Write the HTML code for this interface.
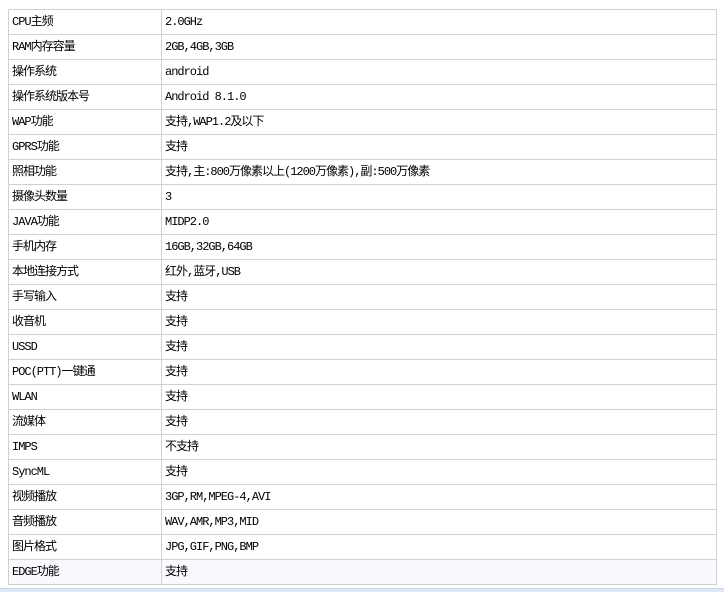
<!DOCTYPE html>
<html><head><meta charset="utf-8"><style>
body{margin:0;background:#fff;width:724px;height:591px;overflow:hidden;position:relative}
table{position:absolute;left:8px;top:9px;border-collapse:collapse;width:709px;font-family:"Liberation Mono","WenQuanYi Zen Hei","Noto Sans CJK SC",monospace;font-size:12px;letter-spacing:-1px;color:#000}
td{border:1px solid #d0d0d0;height:24px;padding:0 0 0 3px;line-height:24px;white-space:nowrap}
td:first-child{width:149px}
tr.l td{background:#f8fafd}
.bar{position:absolute;left:0;top:588px;width:724px;height:3px;background:#dfe9f5;border-top:1px solid #c5d8ee}
</style></head><body>
<table>
<tr><td>CPU主频</td><td>2.0GHz</td></tr>
<tr><td>RAM内存容量</td><td>2GB,4GB,3GB</td></tr>
<tr><td>操作系统</td><td>android</td></tr>
<tr><td>操作系统版本号</td><td>Android 8.1.0</td></tr>
<tr><td>WAP功能</td><td>支持,WAP1.2及以下</td></tr>
<tr><td>GPRS功能</td><td>支持</td></tr>
<tr><td>照相功能</td><td>支持,主:800万像素以上(1200万像素),副:500万像素</td></tr>
<tr><td>摄像头数量</td><td>3</td></tr>
<tr><td>JAVA功能</td><td>MIDP2.0</td></tr>
<tr><td>手机内存</td><td>16GB,32GB,64GB</td></tr>
<tr><td>本地连接方式</td><td>红外,蓝牙,USB</td></tr>
<tr><td>手写输入</td><td>支持</td></tr>
<tr><td>收音机</td><td>支持</td></tr>
<tr><td>USSD</td><td>支持</td></tr>
<tr><td>POC(PTT)一键通</td><td>支持</td></tr>
<tr><td>WLAN</td><td>支持</td></tr>
<tr><td>流媒体</td><td>支持</td></tr>
<tr><td>IMPS</td><td>不支持</td></tr>
<tr><td>SyncML</td><td>支持</td></tr>
<tr><td>视频播放</td><td>3GP,RM,MPEG-4,AVI</td></tr>
<tr><td>音频播放</td><td>WAV,AMR,MP3,MID</td></tr>
<tr><td>图片格式</td><td>JPG,GIF,PNG,BMP</td></tr>
<tr class="l"><td>EDGE功能</td><td>支持</td></tr>
</table>
<div class="bar"></div>
</body></html>
